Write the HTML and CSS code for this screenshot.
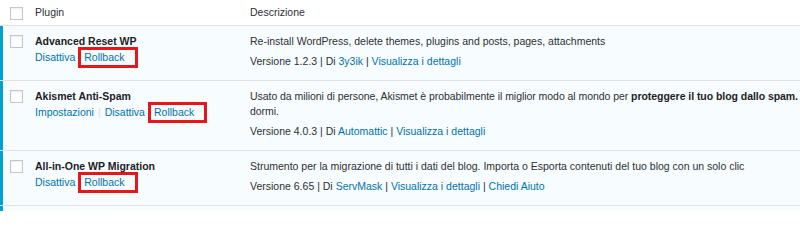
FILE: index.html
```html
<!DOCTYPE html>
<html lang="it">
<head>
<meta charset="utf-8">
<title>Plugin</title>
<link rel="stylesheet" href="styles.css">
</head>
<body>
<div class="plugins">
  <div class="row head">
    <div class="cell check"><span class="box"></span></div>
    <div class="cell name">Plugin</div>
    <div class="cell desc">Descrizione</div>
  </div>

  <div class="row active">
    <div class="cell check"><span class="box"></span></div>
    <div class="cell name">
      <strong class="title">Advanced Reset WP</strong>
      <div class="actions">
        <a class="link">Disattiva</a>
        <a class="link rollback">Rollback</a>
      </div>
    </div>
    <div class="cell desc">
      <p class="text">Re-install WordPress, delete themes, plugins and posts, pages, attachments</p>
      <div class="meta">Versione 1.2.3 | Di <a class="link">3y3ik</a> | <a class="link">Visualizza i dettagli</a></div>
    </div>
  </div>

  <div class="row active">
    <div class="cell check"><span class="box"></span></div>
    <div class="cell name">
      <strong class="title">Akismet Anti-Spam</strong>
      <div class="actions">
        <a class="link">Impostazioni</a><span class="sep">|</span><a class="link">Disattiva</a>
        <a class="link rollback">Rollback</a>
      </div>
    </div>
    <div class="cell desc">
      <p class="text tight">Usato da milioni di persone, Akismet è probabilmente il miglior modo al mondo per <strong>proteggere il tuo blog dallo spam.</strong><br>dormi.</p>
      <div class="meta">Versione 4.0.3 | Di <a class="link">Automattic</a> | <a class="link">Visualizza i dettagli</a></div>
    </div>
  </div>

  <div class="row active">
    <div class="cell check"><span class="box"></span></div>
    <div class="cell name">
      <strong class="title">All-in-One WP Migration</strong>
      <div class="actions">
        <a class="link">Disattiva</a>
        <a class="link rollback">Rollback</a>
      </div>
    </div>
    <div class="cell desc">
      <p class="text">Strumento per la migrazione di tutti i dati del blog. Importa o Esporta contenuti del tuo blog con un solo clic</p>
      <div class="meta">Versione 6.65 | Di <a class="link">ServMask</a> | <a class="link">Visualizza i dettagli</a> | <a class="link">Chiedi Aiuto</a></div>
    </div>
  </div>

  <div class="row active tail"></div>
</div>
</body>
</html>
```

FILE: styles.css
```css
html, body {
  margin: 0;
  padding: 0;
  background: #ffffff;
}

body {
  font-family: "Liberation Sans", Arial, sans-serif;
  font-size: 10.5px;
  line-height: 15px;
  color: #2c3035;
  overflow: hidden;
}

.plugins {
  width: 800px;
  overflow: hidden;
}

.row {
  display: grid;
  grid-template-columns: 35px 205px minmax(0, 1fr);
  border-bottom: 1px solid #e1e1e1;
}

.row.head {
  background: #ffffff;
  height: 25px;
}

.row.head .cell {
  padding-top: 5px;
}

.row.head .check {
  padding-top: 7px;
}

.row.active {
  background: #f7fcfe;
  box-shadow: inset 3px 0 0 #00a0d2;
}

.row.active .cell {
  padding-top: 8px;
  padding-bottom: 11px;
}

.row.active .check {
  padding-top: 9px;
}

.row.tail {
  height: 5px;
  border-bottom: 0;
}

.cell.check {
  padding-left: 10px;
}

.cell.desc {
  padding-left: 10px;
}

.box {
  display: block;
  width: 11px;
  height: 11px;
  background: #ffffff;
  border: 1px solid #c3c7cb;
  box-shadow: inset 0 1px 2px rgba(0, 0, 0, 0.08);
}

.title {
  display: block;
  font-weight: bold;
  color: #1d2125;
  margin-bottom: 1px;
}

.actions {
  display: flex;
  align-items: center;
}

.link {
  color: #0073aa;
  text-decoration: none;
}

.sep {
  color: #dcdcde;
  margin: 0 4px;
}

.rollback {
  display: inline-block;
  margin-left: 6px;
  padding: 0 10px 0 3px;
  outline: 3px solid #e8161b;
}

.text {
  margin: 0 0 5px;
}

.text strong {
  font-weight: bold;
  color: #1d2125;
}

.tight {
  white-space: nowrap;
  letter-spacing: -0.05px;
}
```
